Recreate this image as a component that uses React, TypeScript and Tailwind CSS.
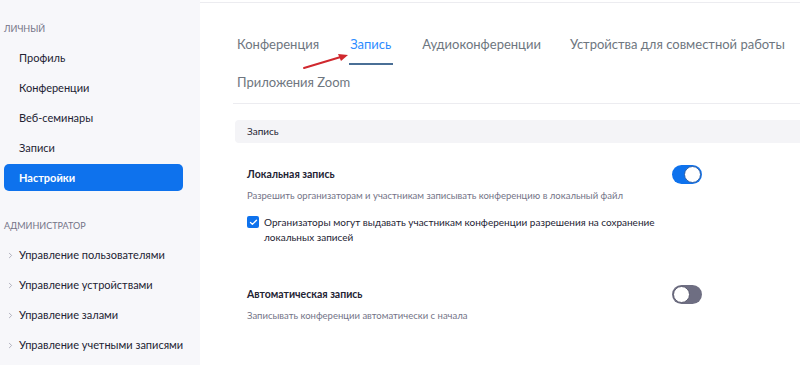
import { ChevronRight, Check } from 'lucide-react';

const personal = ['Профиль', 'Конференции', 'Веб-семинары', 'Записи'];
const admin = [
  'Управление пользователями',
  'Управление устройствами',
  'Управление залами',
  'Управление учетными записями',
];

function Toggle({ on }: { on: boolean }) {
  return on ? (
    <div className="w-[30px] h-[19px] rounded-full bg-[#0e72ed] flex items-center justify-end pr-[1px]">
      <div className="w-[17px] h-[17px] rounded-full bg-white border border-[#2d5fa8]" />
    </div>
  ) : (
    <div className="w-[30px] h-[19px] rounded-full bg-[#6e6e82] flex items-center pl-[1px]">
      <div className="w-[17px] h-[17px] rounded-full bg-white border border-[#5a5a6e]" />
    </div>
  );
}

export default function App() {
  return (
    <div className="w-[800px] h-[365px] overflow-hidden flex bg-white font-['Lato','Noto_Sans',sans-serif]">
      <aside className="w-[200px] shrink-0 bg-[#f7f7fa] pt-[22px] pl-[4px] pr-[17px]">
        <div className="text-[9px] text-[#747487] uppercase h-[14px] leading-[14px]">личный</div>
        <nav className="mt-[7px] flex flex-col">
          {personal.map((p) => (
            <div key={p} className="h-[30px] leading-[30px] pl-[15px] text-[11px] text-[#232333]">
              {p}
            </div>
          ))}
          <div className="h-[27px] leading-[27px] pl-[15px] text-[11px] font-bold text-white bg-[#0e72ed] rounded-[5px] mt-[1px]">
            Настройки
          </div>
        </nav>
        <div className="mt-[28px] text-[9px] text-[#747487] uppercase h-[14px] leading-[14px]">администратор</div>
        <div className="mt-[7px] flex flex-col">
          {admin.map((a) => (
            <div key={a} className="h-[30px] flex items-center text-[11px] text-[#232333] whitespace-nowrap">
              <ChevronRight className="w-[9px] h-[9px] text-[#9a9aa8] ml-[2px] mr-[4px] shrink-0" strokeWidth={2} />
              {a}
            </div>
          ))}
        </div>
      </aside>

      <main className="flex-1 min-w-0 relative">
        <div className="h-[3px] border-b border-[#ececf0]" />
        <div className="pl-[33px]">
          <div className="pl-[4px] pt-[32px] flex items-start text-[13px] text-[#6e7680] whitespace-nowrap">
            <div className="mr-[31px] h-[32px] leading-[18px]">Конференция</div>
            <div className="mr-[31px] h-[32px] leading-[18px] text-[#2d8cff] relative">
              Запись
              <div className="absolute left-[-1px] right-[-2px] top-[28px] h-[2px] bg-[#4a6f96]" />
            </div>
            <div className="mr-[29px] h-[32px] leading-[18px]">Аудиоконференции</div>
            <div className="h-[32px] leading-[18px]">Устройства для совместной работы</div>
          </div>
          <div className="pl-[4px] text-[13px] text-[#6e7680] leading-[18px] mt-[6px]">Приложения Zoom</div>
          <div className="mt-[12px] h-px bg-[#ececf0]" />

          <div className="mt-[16px] ml-[2px] h-[23px] bg-[#f4f4f7] rounded-l-[4px] flex items-center pl-[12px] text-[10px] text-[#232333]">
            Запись
          </div>

          <div className="pl-[14px] pr-[98px]">
            <div className="mt-[22px] flex items-center justify-between">
              <div className="text-[10.5px] font-bold text-[#232333]">Локальная запись</div>
              <Toggle on />
            </div>
            <div className="mt-[5px] text-[9.5px] text-[#747487] whitespace-nowrap">
              Разрешить организаторам и участникам записывать конференцию в локальный файл
            </div>
            <div className="mt-[12px] flex items-start">
              <div className="w-[12px] h-[12px] mt-[1px] rounded-[2px] bg-[#0e72ed] flex items-center justify-center shrink-0">
                <Check className="w-[9px] h-[9px] text-white" strokeWidth={3.5} />
              </div>
              <div className="ml-[5px] text-[10px] leading-[15px] text-[#232333] whitespace-nowrap">
                Организаторы могут выдавать участникам конференции разрешения на сохранение
                <br />
                локальных записей
              </div>
            </div>

            <div className="mt-[40px] flex items-center justify-between">
              <div className="text-[10.5px] font-bold text-[#232333]">Автоматическая запись</div>
              <Toggle on={false} />
            </div>
            <div className="mt-[5px] text-[9.5px] text-[#747487]">
              Записывать конференции автоматически с начала
            </div>

            <div className="mt-[42px] flex items-center text-[10.5px] font-bold text-[#232333]">
              Уведомление о записи в Облако Zoom
              <span className="ml-[4px] w-[11px] h-[11px] rounded-full border border-[#747487] inline-block" />
            </div>
          </div>
        </div>

        <svg className="absolute left-[100px] top-[50px]" width="52" height="22" viewBox="0 0 52 22">
          <line x1="4" y1="18" x2="44" y2="6" stroke="#d0282e" strokeWidth="2" strokeLinecap="round" />
          <path d="M48 5 L38 4 L41 11 Z" fill="#d0282e" />
        </svg>
      </main>
    </div>
  );
}
